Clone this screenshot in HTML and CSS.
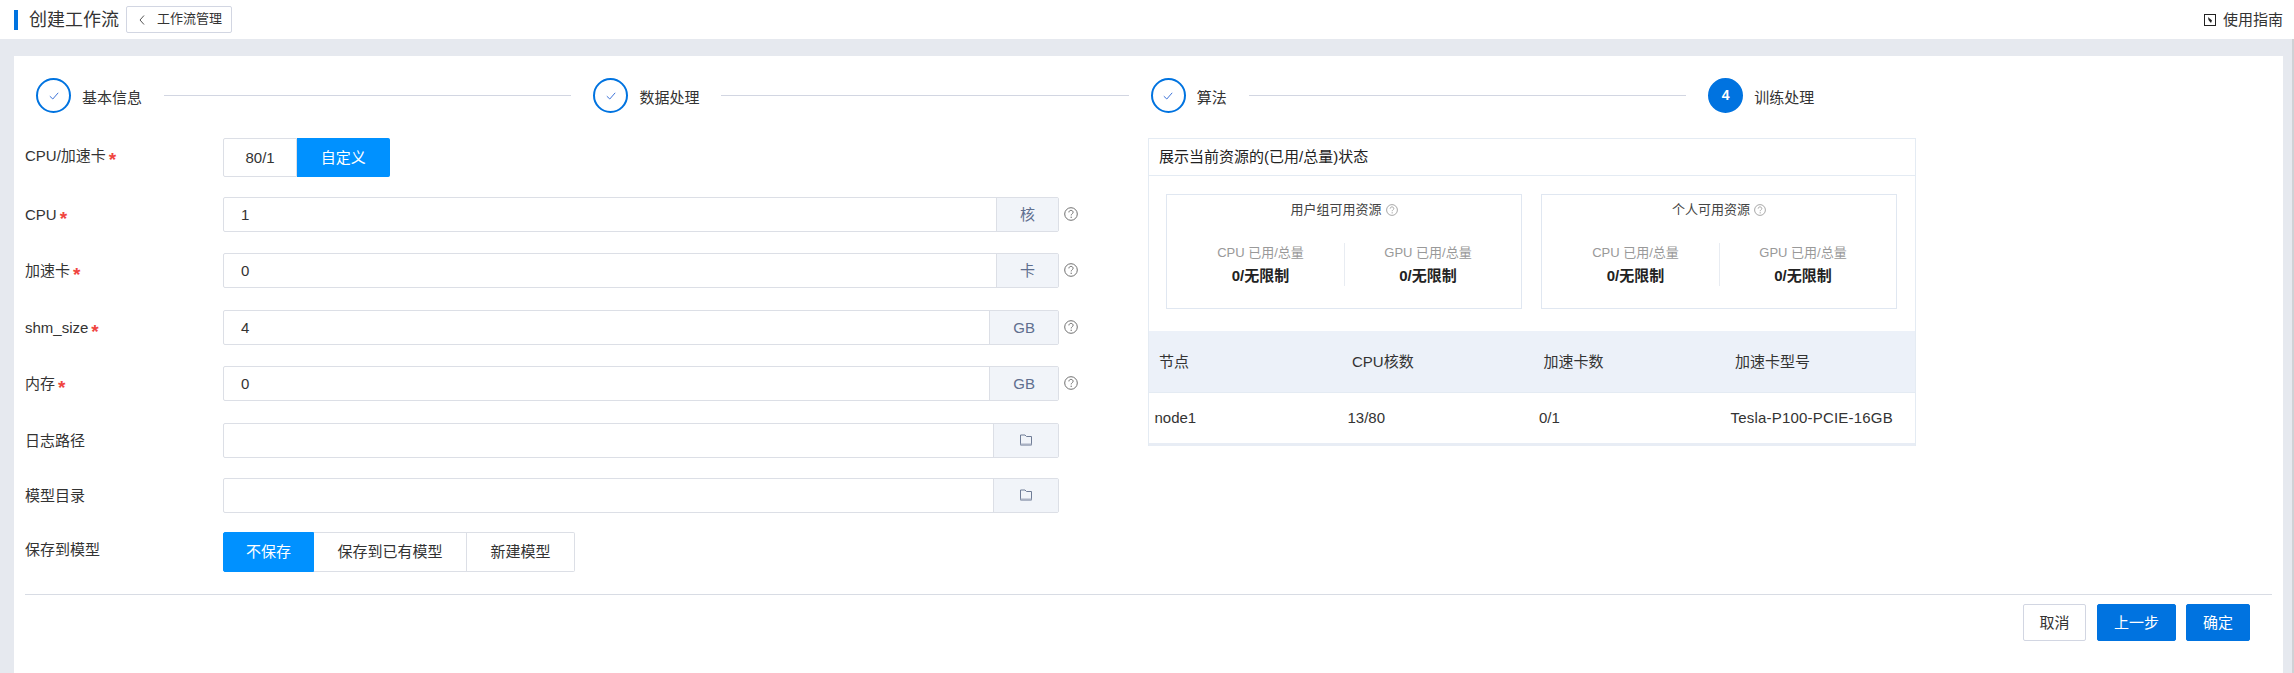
FILE: index.html
```html
<!DOCTYPE html>
<html lang="zh-CN">
<head>
<meta charset="utf-8">
<title>创建工作流</title>
<link rel="stylesheet" href="styles.css">
</head>
<body>
<svg class="defs" width="0" height="0" aria-hidden="true">
  <symbol id="help" viewBox="0 0 14 14">
    <circle cx="7" cy="7" r="6.3" fill="none" stroke="currentColor" stroke-width="1"/>
    <path d="M4.9 5.4C4.9 4.1 5.9 3.4 7 3.4C8.2 3.4 9.1 4.2 9.1 5.3C9.1 6.7 7.2 6.8 7.2 8.4" fill="none" stroke="currentColor" stroke-width="1"/>
    <rect x="6.6" y="9.7" width="1.2" height="1.2" fill="currentColor"/>
  </symbol>
  <symbol id="folder" viewBox="0 0 12 12">
    <path d="M.5 11V1H5L6.5 2.5H11.5V11Z" fill="none" stroke="#6f7c96" stroke-width="1"/>
    <path d="M.5 10.5H11.5" stroke="#a9b1c2" stroke-width="2"/>
  </symbol>
  <symbol id="check" viewBox="0 0 10 8">
    <path d="M.8 4.2L3.8 7L9.2 .8" fill="none" stroke="#3f74d8" stroke-width="1"/>
  </symbol>
</svg>

<header class="topbar">
  <div class="topbar-left">
    <span class="title-mark"></span>
    <h1 class="title">创建工作流</h1>
    <button class="back-btn">
      <svg class="back-icon" width="6" height="10" viewBox="0 0 6 10"><path d="M5 .5L1 5L5 9.5" fill="none" stroke="#555" stroke-width="1"/></svg>
      工作流管理
    </button>
  </div>
  <a class="guide">
    <svg class="guide-icon" width="12" height="12" viewBox="0 0 12 12"><rect x=".5" y=".5" width="11" height="11" fill="none" stroke="#222" stroke-width="1"/><path d="M4 3L8 6.5L7 9L4.5 6Z" fill="#222"/></svg>
    使用指南
  </a>
</header>

<main class="main">
  <section class="card">
    <div class="steps">
      <div class="step">
        <span class="step-dot"><svg class="step-check"><use href="#check"/></svg></span>
        <span class="step-label">基本信息</span>
        <span class="step-line"></span>
      </div>
      <div class="step">
        <span class="step-dot"><svg class="step-check"><use href="#check"/></svg></span>
        <span class="step-label">数据处理</span>
        <span class="step-line"></span>
      </div>
      <div class="step">
        <span class="step-dot"><svg class="step-check"><use href="#check"/></svg></span>
        <span class="step-label">算法</span>
        <span class="step-line"></span>
      </div>
      <div class="step step-last">
        <span class="step-dot step-dot-active">4</span>
        <span class="step-label">训练处理</span>
      </div>
    </div>

    <div class="content">
      <form class="form">
        <div class="row row-seg">
          <label class="label">CPU/加速卡<i class="req">*</i></label>
          <div class="seg seg-short">
            <span class="seg-item seg-narrow">80/1</span>
            <span class="seg-item seg-on">自定义</span>
          </div>
        </div>
        <div class="row">
          <label class="label">CPU<i class="req">*</i></label>
          <div class="field"><span class="field-value">1</span><span class="addon">核</span></div>
          <svg class="help"><use href="#help"/></svg>
        </div>
        <div class="row">
          <label class="label">加速卡<i class="req">*</i></label>
          <div class="field"><span class="field-value">0</span><span class="addon">卡</span></div>
          <svg class="help"><use href="#help"/></svg>
        </div>
        <div class="row">
          <label class="label">shm_size<i class="req">*</i></label>
          <div class="field"><span class="field-value">4</span><span class="addon">GB</span></div>
          <svg class="help"><use href="#help"/></svg>
        </div>
        <div class="row">
          <label class="label">内存<i class="req">*</i></label>
          <div class="field"><span class="field-value">0</span><span class="addon">GB</span></div>
          <svg class="help"><use href="#help"/></svg>
        </div>
        <div class="row row-log">
          <label class="label">日志路径</label>
          <div class="field"><span class="field-value"></span><span class="addon addon-icon"><svg class="folder"><use href="#folder"/></svg></span></div>
        </div>
        <div class="row row-tight">
          <label class="label">模型目录</label>
          <div class="field"><span class="field-value"></span><span class="addon addon-icon"><svg class="folder"><use href="#folder"/></svg></span></div>
        </div>
        <div class="row row-last">
          <label class="label">保存到模型</label>
          <div class="seg">
            <span class="seg-item seg-on seg-first">不保存</span>
            <span class="seg-item">保存到已有模型</span>
            <span class="seg-item">新建模型</span>
          </div>
        </div>
      </form>

      <aside class="panel">
        <div class="panel-head">展示当前资源的(已用/总量)状态</div>
        <div class="quota-list">
          <div class="quota">
            <div class="quota-title">用户组可用资源 <svg class="help-sm"><use href="#help"/></svg></div>
            <div class="quota-stats">
              <div class="stat"><div class="stat-name">CPU 已用/总量</div><div class="stat-value">0/无限制</div></div>
              <div class="stat"><div class="stat-name">GPU 已用/总量</div><div class="stat-value">0/无限制</div></div>
            </div>
          </div>
          <div class="quota">
            <div class="quota-title">个人可用资源 <svg class="help-sm"><use href="#help"/></svg></div>
            <div class="quota-stats">
              <div class="stat"><div class="stat-name">CPU 已用/总量</div><div class="stat-value">0/无限制</div></div>
              <div class="stat"><div class="stat-name">GPU 已用/总量</div><div class="stat-value">0/无限制</div></div>
            </div>
          </div>
        </div>
        <table class="nodes">
          <thead>
            <tr><th class="col-a">节点</th><th class="col-b">CPU核数</th><th class="col-b">加速卡数</th><th>加速卡型号</th></tr>
          </thead>
          <tbody>
            <tr><td>node1</td><td>13/80</td><td>0/1</td><td class="cell-model">Tesla-P100-PCIE-16GB</td></tr>
          </tbody>
        </table>
      </aside>
    </div>

    <div class="footer">
      <button class="btn btn-cancel">取消</button>
      <button class="btn btn-primary btn-prev">上一步</button>
      <button class="btn btn-primary btn-ok">确定</button>
    </div>
  </section>
</main>
</body>
</html>
```
FILE: styles.css
```css
* { box-sizing: border-box; }
html, body { margin: 0; height: 673px; overflow: hidden; }
body {
  display: flex;
  flex-direction: column;
  background: #e6e9ef;
  color: #333;
  font: 15px/1.4 "Liberation Sans", "Noto Sans CJK SC", sans-serif;
}
.defs { position: absolute; }

.topbar {
  flex: none;
  height: 39px;
  background: #fff;
  display: flex;
  align-items: center;
  justify-content: space-between;
  padding: 0 11px 0 14px;
}
.topbar-left { display: flex; align-items: center; }
.title-mark { width: 4px; height: 20px; margin-right: 11px; background: #0073e0; }
.title { margin: 0; font-size: 18px; font-weight: 400; line-height: 26px; color: #333; }
.back-btn {
  display: flex;
  align-items: center;
  width: 106px;
  height: 27px;
  margin: 0 0 0 7px;
  padding: 0 0 0 12px;
  background: #fff;
  border: 1px solid #d2d6e2;
  border-radius: 2px;
  font: inherit;
  font-size: 13px;
  color: #333;
}
.back-icon { margin-right: 12px; }
.guide { display: flex; align-items: center; font-size: 15px; color: #333; }
.guide-icon { margin-right: 7px; }

.main {
  flex: 1;
  display: flex;
  min-height: 0;
  padding: 17px 9px 0 14px;
  border-right: 2px solid #cfd2d6;
}
.card { flex: 1; background: #fff; padding: 22px 11px 0; }

.steps { display: flex; align-items: center; height: 35px; padding-left: 11px; }
.step { flex: 0 0 557.4px; display: flex; align-items: center; }
.step-last { flex: none; }
.step-dot {
  flex: none;
  width: 35px;
  height: 35px;
  display: flex;
  align-items: center;
  justify-content: center;
  border: 2px solid #0073e0;
  border-radius: 50%;
  font-size: 14px;
  font-weight: 700;
}
.step-dot-active { background: #0073e0; color: #fff; }
.step-check { width: 10px; height: 8px; }
.step-label { margin-left: 11px; font-size: 15px; line-height: 21px; padding-top: 4px; color: #333; }
.step-line { flex: 1; height: 1px; margin: 0 22px; background: #d2d6e2; }

.content { display: flex; align-items: flex-start; margin-top: 25px; }
.form { flex: none; width: 1053px; }
.row { display: flex; align-items: flex-start; margin-bottom: 21.4px; }
.row-seg { margin-bottom: 20px; }
.row-log { margin-bottom: 20.4px; }
.row-tight { margin-bottom: 19px; }
.row-last { margin-bottom: 0; }
.label { flex: none; width: 198px; height: 35px; line-height: 36px; font-size: 15px; color: #333; }
.req {
  margin-left: 3px;
  font-style: normal;
  font-weight: 700;
  color: #f0453f;
  font-size: 19px;
  line-height: 0;
  vertical-align: -5px;
}
.field {
  display: flex;
  width: 836px;
  height: 35px;
  border: 1px solid #dcdfe6;
  border-radius: 2px;
  background: #fff;
}
.field-value { flex: 1; padding-left: 17px; line-height: 33px; font-size: 15px; color: #333; }
.addon {
  flex: none;
  padding: 0 23px;
  line-height: 33px;
  background: #f1f4f9;
  border-left: 1px solid #dcdfe6;
  color: #5f6f8f;
  font-size: 15px;
}
.addon-icon { width: 65px; padding: 0; display: flex; align-items: center; justify-content: center; }
.folder { width: 12px; height: 12px; }
.help { flex: none; width: 14px; height: 14px; margin: 10px 0 0 5px; color: #707070; }

.seg { display: flex; height: 40px; }
.seg-short { height: 39px; }
.seg-item {
  display: flex;
  align-items: center;
  padding: 0 23.5px;
  border: 1px solid #dcdfe6;
  border-left-width: 0;
  font-size: 15px;
  color: #333;
}
.seg-item:first-child { border-left-width: 1px; border-radius: 2px 0 0 2px; }
.seg-item:last-child { border-radius: 0 2px 2px 0; }
.seg-narrow { padding: 0 21.5px; }
.seg-on { background: #0091ff; border-color: #0091ff; color: #fff; }
.seg-first { padding: 0 22px; }

.panel {
  flex: none;
  width: 768px;
  margin-left: 70px;
  border: 1px solid #e4ebf3;
  border-bottom: 0;
  background: #fff;
}
.panel-head {
  height: 37px;
  padding-left: 10px;
  line-height: 36px;
  font-size: 15px;
  color: #222;
  border-bottom: 1px solid #e4ebf3;
}
.quota-list { display: flex; gap: 19px; padding: 18px 18px 22px 17px; }
.quota { flex: 1; height: 115px; border: 1px solid #e0e7f1; }
.quota-title {
  display: flex;
  align-items: center;
  justify-content: center;
  gap: 4px;
  height: 30px;
  font-size: 13px;
  color: #444;
}
.help-sm { width: 12px; height: 12px; color: #999; }
.quota-stats { display: flex; justify-content: center; margin-top: 18px; }
.stat { width: 167px; height: 43px; text-align: center; }
.stat + .stat { border-left: 1px solid #e8ecf2; }
.stat-name { font-size: 13px; line-height: 18px; color: #999; margin-top: 1px; }
.stat-value { font-size: 15px; line-height: 22px; margin-top: 3px; font-weight: 700; color: #222; }

.nodes { width: 100%; table-layout: fixed; border-collapse: collapse; }
.nodes th {
  height: 61px;
  padding: 0 0 0 10px;
  background: #ecf1f9;
  font-size: 15px;
  font-weight: 400;
  text-align: left;
  color: #333;
}
.col-a { width: 193px; }
.col-b { width: 191.5px; }
.nodes td {
  height: 52px;
  padding: 0 0 0 5.5px;
  font-size: 15px;
  color: #333;
  border-top: 1px solid #e4ebf3;
  border-bottom: 3px solid #e8edf5;
}
.nodes .cell-model { letter-spacing: .2px; }

.footer {
  display: flex;
  justify-content: flex-end;
  margin-top: 22px;
  padding: 9px 22px 0 0;
  border-top: 1px solid #d8dce4;
}
.btn {
  height: 37px;
  margin: 0;
  padding: 0;
  border: 1px solid #d2d6e2;
  border-radius: 2px;
  background: #fff;
  font: inherit;
  font-size: 15px;
  color: #333;
}
.btn-cancel { width: 63px; }
.btn-primary { background: #0073e0; border-color: #0073e0; color: #fff; }
.btn-prev { width: 79px; margin-left: 11px; }
.btn-ok { width: 64px; margin-left: 10px; }
```
